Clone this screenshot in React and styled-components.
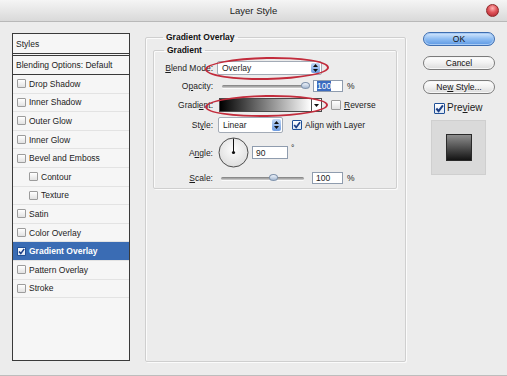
import React from 'react';
import styled, {createGlobalStyle} from 'styled-components';

const GlobalStyle = createGlobalStyle`
  html, body {
    margin: 0;
    padding: 0;
    background: #ececec;
  }
  body {
    font-family: "Liberation Sans", Arial, sans-serif;
    font-size: 8.5px;
    color: #1c1c1c;
  }
`;

const Window = styled.div`
  width: 507px;
  height: 376px;
  box-sizing: border-box;
  display: flex;
  flex-direction: column;
  background: #ececec;
  border-bottom: 1px solid #bdbdbd;
  overflow: hidden;
`;

const TitleBar = styled.div`
  height: 22px;
  box-sizing: border-box;
  display: grid;
  grid-template-columns: 1fr auto 1fr;
  align-items: center;
  background: linear-gradient(#f5f5f5, #d9d9d9);
  border-bottom: 1px solid #b8b8b8;
  font-size: 9.5px;
  color: #222;
`;

const Title = styled.div`
  grid-column: 2;
`;

const CloseButton = styled.span`
  grid-column: 3;
  justify-self: end;
  margin-right: 8px;
  width: 11px;
  height: 11px;
  border-radius: 50%;
  border: 1px solid #8d2a2a;
  background: radial-gradient(circle at 50% 30%, #ffb3b3 0, #e0545a 45%, #a8202a 100%);
`;

const Body = styled.div`
  flex: 1;
  display: flex;
  padding: 11px 12px 14px 12px;
`;

/* ---------- styles list ---------- */

const StyleList = styled.div`
  width: 118px;
  box-sizing: border-box;
  border: 1px solid #3a3a3a;
  background: #f6f6f6;
  display: flex;
  flex-direction: column;
`;

const ListHeader = styled.div`
  height: ${p => p.$h}px;
  display: flex;
  align-items: center;
  padding-left: 3px;
  border-bottom: ${p => (p.$double ? '3px double #3a3a3a' : '1px solid #3a3a3a')};
`;

const ListItem = styled.div`
  height: 18.6px;
  box-sizing: border-box;
  display: flex;
  align-items: center;
  gap: 3px;
  padding-left: ${p => (p.$indent ? 16 : 4)}px;
  border-bottom: 1px solid #e3e3e3;
  background: ${p => (p.$selected ? '#3a6cb4' : 'transparent')};
  color: ${p => (p.$selected ? '#fff' : 'inherit')};
  font-weight: ${p => (p.$selected ? 'bold' : 'normal')};
`;

const Box = styled.span`
  width: ${p => p.$size}px;
  height: ${p => p.$size}px;
  box-sizing: border-box;
  flex: none;
  display: inline-flex;
  align-items: center;
  justify-content: center;
  border: 1px solid ${p => (p.$checked ? '#1f4f96' : '#9c9c9c')};
  border-radius: 1px;
  background: ${p => (p.$checked ? 'linear-gradient(#ffffff, #dce6f4)' : 'linear-gradient(#ffffff, #e2e2e2)')};
`;

const Checkbox = ({size = 9, checked}) => (
    <Box $size={size} $checked={checked}>
        {checked && (
            <svg width={size - 2} height={size - 2} viewBox="0 0 10 10">
                <path d="M1.5 5 L4 8 L8.8 1.5" fill="none" stroke="#1c3f86" strokeWidth="2.2"/>
            </svg>
        )}
    </Box>
);

/* ---------- main group ---------- */

const Group = styled.fieldset`
  margin: ${p => p.$margin};
  padding: ${p => p.$padding};
  min-width: 0;
  box-sizing: border-box;
  border: 1px solid #cfcfcf;
  box-shadow: inset 1px 1px 0 #fbfbfb, 1px 1px 0 #fbfbfb;
  border-radius: 2px;
  display: flex;
  flex-direction: column;
`;

const Legend = styled.legend`
  margin-left: 10px;
  padding: 0 3px;
  font-weight: bold;
  line-height: 10px;
  color: #111;
`;

const MainColumn = styled.div`
  width: 261px;
  margin-left: 15px;
  display: flex;
  flex-direction: column;
`;

const Form = styled.div`
  display: flex;
  flex-direction: column;
  gap: 4px;
`;

const Row = styled.div`
  height: ${p => p.$h}px;
  display: grid;
  grid-template-columns: 59px 1fr;
  column-gap: 4px;
  align-items: center;
`;

const Label = styled.span`
  text-align: right;
`;

const Controls = styled.div`
  display: flex;
  align-items: center;
  gap: ${p => p.$gap || 0}px;
  padding-left: ${p => p.$indent || 0}px;
`;

const Key = styled.u`
  text-decoration-thickness: 1px;
  text-underline-offset: 1px;
`;

const Select = styled.div`
  position: relative;
  width: ${p => p.$w}px;
  height: ${p => p.$h}px;
  box-sizing: border-box;
  display: flex;
  align-items: center;
  justify-content: space-between;
  padding-left: 4px;
  background: #fff;
  border: 1px solid #a3abb6;
  border-radius: 2px;
`;

const SpinnerBox = styled.span`
  align-self: stretch;
  width: 9px;
  margin: 1px;
  border-radius: 2px;
  background: linear-gradient(#c4daf8, #6d9be0);
  display: flex;
  align-items: center;
  justify-content: center;
`;

const Spinner = () => (
    <SpinnerBox>
        <svg width="5" height="8" viewBox="0 0 5 8">
            <path d="M0 3 L2.5 0 L5 3 Z M0 5 L2.5 8 L5 5 Z" fill="#111"/>
        </svg>
    </SpinnerBox>
);

const Annotation = styled.span`
  position: absolute;
  left: ${p => p.$left}px;
  top: ${p => p.$top}px;
  width: ${p => p.$w}px;
  height: ${p => p.$h}px;
  box-sizing: border-box;
  border: 2px solid #c22c3c;
  border-radius: 50%;
  transform: rotate(-1deg);
  pointer-events: none;
`;

const Slider = styled.div`
  position: relative;
  width: ${p => p.$w}px;
  height: 3px;
  border-radius: 2px;
  background: linear-gradient(#7c7c7c, #d2d2d2);
  box-shadow: 0 1px 0 #fafafa;
`;

const Thumb = styled.span`
  position: absolute;
  top: -3px;
  width: 9px;
  height: 7px;
  margin-left: -4px;
  box-sizing: border-box;
  border-radius: 50%;
  border: 1px solid #8194ad;
  background: linear-gradient(#eef3fa, #a7bad3);
`;

const NumberBox = styled.div`
  width: ${p => p.$w}px;
  height: ${p => p.$h || 12}px;
  box-sizing: border-box;
  display: flex;
  align-items: center;
  padding-left: 3px;
  background: #fff;
  border: 1px solid #8f9cae;
`;

const Highlight = styled.span`
  background: #3b6cc0;
  color: #fff;
`;

const GradientField = styled.div`
  position: relative;
  width: 103px;
  height: 14px;
  box-sizing: border-box;
  display: flex;
  border: 1px solid #4a4a4a;
`;

const GradientBar = styled.div`
  flex: 1;
  background: linear-gradient(90deg, #000 0%, #5a5a5a 35%, #fff 100%);
`;

const DropArrow = styled.span`
  width: 9px;
  background: #fff;
  border-left: 1px solid #4a4a4a;
  display: flex;
  align-items: center;
  justify-content: center;
`;

const Dial = () => (
    <svg width="31" height="31" viewBox="0 0 31 31">
        <defs>
            <radialGradient id="dialFill" cx="50%" cy="40%" r="60%">
                <stop offset="0" stopColor="#fdfdfd"/>
                <stop offset="1" stopColor="#dedede"/>
            </radialGradient>
        </defs>
        <circle cx="15.5" cy="15.5" r="14.5" fill="url(#dialFill)" stroke="#4d4d4d" strokeWidth="1"/>
        <line x1="15.5" y1="15.5" x2="15.5" y2="1.5" stroke="#111" strokeWidth="1"/>
        <circle cx="15.5" cy="15.5" r="1.6" fill="#111"/>
    </svg>
);

/* ---------- right column ---------- */

const SideColumn = styled.div`
  width: 72px;
  margin-left: 17px;
  margin-top: -1px;
  display: flex;
  flex-direction: column;
`;

const Button = styled.div`
  height: 14px;
  box-sizing: border-box;
  margin-bottom: 10px;
  display: flex;
  align-items: center;
  justify-content: center;
  border-radius: 7px;
  border: 1px solid ${p => (p.$primary ? '#3d6db0' : '#7b7b7b')};
  background: ${p => (p.$primary
        ? 'linear-gradient(#d6e8fd, #8dbcf2 50%, #5c98e4)'
        : 'linear-gradient(#ffffff, #f1f1f1 50%, #dcdcdc)')};
  box-shadow: inset 0 0 0 1px ${p => (p.$primary ? '#a8cbf5' : '#f7f7f7')};
  color: #111;
`;

const PreviewToggle = styled.div`
  display: flex;
  align-items: center;
  gap: 2px;
  margin: -2px 0 0 11px;
  font-size: 10px;
  line-height: 12px;
`;

const PreviewBox = styled.div`
  width: 55px;
  height: 55px;
  margin: 6px 0 0 8px;
  box-sizing: border-box;
  border: 1px solid #cfcfcf;
  background: #dadada;
  display: flex;
  align-items: center;
  justify-content: center;
`;

const PreviewSwatch = styled.div`
  width: 26px;
  height: 27px;
  box-sizing: border-box;
  border: 1px solid #2a2a2a;
  background: linear-gradient(#8e8e8e, #141414);
`;

const layerStyles = [
    {name: 'Drop Shadow'},
    {name: 'Inner Shadow'},
    {name: 'Outer Glow'},
    {name: 'Inner Glow'},
    {name: 'Bevel and Emboss'},
    {name: 'Contour', indent: true},
    {name: 'Texture', indent: true},
    {name: 'Satin'},
    {name: 'Color Overlay'},
    {name: 'Gradient Overlay', checked: true},
    {name: 'Pattern Overlay'},
    {name: 'Stroke'},
];

const App = () => {
    return (
        <>
            <GlobalStyle/>
            <Window>
                <TitleBar>
                    <Title>Layer Style</Title>
                    <CloseButton/>
                </TitleBar>
                <Body>
                    <StyleList>
                        <ListHeader $h={19} $double>Styles</ListHeader>
                        <ListHeader $h={18}>Blending Options: Default</ListHeader>
                        {layerStyles.map(item => (
                            <ListItem key={item.name} $indent={item.indent} $selected={item.checked}>
                                <Checkbox checked={item.checked}/>
                                {item.name}
                            </ListItem>
                        ))}
                    </StyleList>

                    <MainColumn>
                        <Group $margin="-1px 0 -1px 0" $padding="0 8px 0 7px" style={{flex: 1}}>
                            <Legend>Gradient Overlay</Legend>
                            <Group $margin="3px 0 0 0" $padding="6px 0 3px 0">
                                <Legend>Gradient</Legend>
                                <Form>
                                    <Row $h={14}>
                                        <Label><Key>B</Key>lend Mode:</Label>
                                        <Controls>
                                            <Select $w={105} $h={14}>
                                                Overlay
                                                <Spinner/>
                                                <Annotation $left={-13} $top={-5} $w={124} $h={23}/>
                                            </Select>
                                        </Controls>
                                    </Row>
                                    <Row $h={14}>
                                        <Label>O<Key>p</Key>acity:</Label>
                                        <Controls $indent={5} $gap={6}>
                                            <Slider $w={85}><Thumb style={{left: '98%'}}/></Slider>
                                            <NumberBox $w={30}><Highlight>100</Highlight></NumberBox>
                                            <span style={{marginLeft: -2}}>%</span>
                                        </Controls>
                                    </Row>
                                    <Row $h={16}>
                                        <Label>Gradi<Key>e</Key>nt:</Label>
                                        <Controls $indent={2} $gap={9}>
                                            <GradientField>
                                                <GradientBar/>
                                                <DropArrow>
                                                    <svg width="5" height="3" viewBox="0 0 5 3">
                                                        <path d="M0 0 H5 L2.5 3 Z" fill="#111"/>
                                                    </svg>
                                                </DropArrow>
                                                <Annotation $left={-15} $top={-4} $w={123} $h={22}/>
                                            </GradientField>
                                            <Controls $gap={3}>
                                                <Checkbox size={10}/>
                                                <span><Key>R</Key>everse</span>
                                            </Controls>
                                        </Controls>
                                    </Row>
                                    <Row $h={16}>
                                        <Label>St<Key>y</Key>le:</Label>
                                        <Controls $indent={1} $gap={9}>
                                            <Select $w={65} $h={16}>
                                                Linear
                                                <Spinner/>
                                            </Select>
                                            <Controls $gap={3}>
                                                <Checkbox size={10} checked/>
                                                <span>Align w<Key>i</Key>th Layer</span>
                                            </Controls>
                                        </Controls>
                                    </Row>
                                    <Row $h={30}>
                                        <Label>A<Key>n</Key>gle:</Label>
                                        <Controls $indent={1} $gap={3}>
                                            <Dial/>
                                            <NumberBox $w={36} $h={13}>90</NumberBox>
                                            <span style={{alignSelf: 'flex-start', marginTop: 6}}>°</span>
                                        </Controls>
                                    </Row>
                                    <Row $h={14}>
                                        <Label><Key>S</Key>cale:</Label>
                                        <Controls $indent={4} $gap={8}>
                                            <Slider $w={83}><Thumb style={{left: '63%'}}/></Slider>
                                            <NumberBox $w={31}>100</NumberBox>
                                            <span style={{marginLeft: -4}}>%</span>
                                        </Controls>
                                    </Row>
                                </Form>
                            </Group>
                        </Group>
                    </MainColumn>

                    <SideColumn>
                        <Button $primary>OK</Button>
                        <Button>Cancel</Button>
                        <Button><span>Ne<Key>w</Key> Style...</span></Button>
                        <PreviewToggle>
                            <Checkbox size={11} checked/>
                            <span>Pre<Key>v</Key>iew</span>
                        </PreviewToggle>
                        <PreviewBox>
                            <PreviewSwatch/>
                        </PreviewBox>
                    </SideColumn>
                </Body>
            </Window>
        </>
    );
};

export default App;
